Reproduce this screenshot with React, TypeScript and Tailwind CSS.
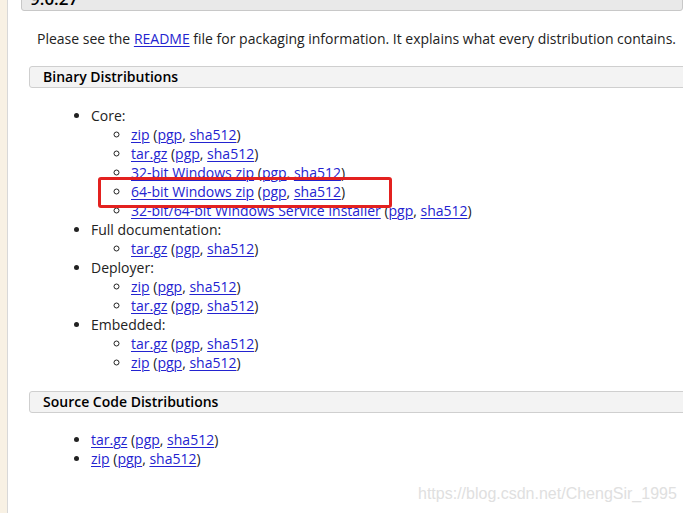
import React from "react";

const A = ({ children }: { children: React.ReactNode }) => (
  <a href="#" className="text-[#2323d0] underline decoration-1 underline-offset-[2px]">
    {children}
  </a>
);

const Links = ({ main }: { main: string }) => (
  <>
    <A>{main}</A> (<A>pgp</A>, <A>sha512</A>)
  </>
);

const Sub = ({ items }: { items: string[] }) => (
  <ul className="list-[circle] pl-[40px]">
    {items.map((m, i) => (
      <li key={i}>
        <Links main={m} />
      </li>
    ))}
  </ul>
);

export default function App() {
  return (
    <div
      className="flex min-h-[513px] w-[683px] overflow-hidden bg-white text-[14px] leading-[19px] text-[#222]"
      style={{ fontFamily: '"Open Sans", sans-serif' }}
    >
      <div className="w-[8px] shrink-0 bg-[#f8f1e4] border-r border-[#d8d8d8]" />
      <div className="relative flex-1 pl-[13px]">
        <div className="-mt-[12px] h-[23px] rounded-[3px] border border-[#c8c8c8] bg-[#e9e9e9] pl-[8px] text-[17px] font-semibold leading-[20px] text-black">
          9.0.27
        </div>
        <div className="pl-[8px]">
          <p className="mt-[18px] pl-[8px] whitespace-nowrap">
            Please see the <A>README</A> file for packaging information. It explains what every distribution contains.
          </p>
          <div className="mt-[18px] mr-[-10px] h-[22px] rounded-[3px] border border-[#cfcfcf] bg-[#f3f3f3] pl-[13px] font-semibold leading-[20px] text-black">
            Binary Distributions
          </div>
          <ul className="mt-[18px] list-disc pl-[62px]">
            <li>
              Core:
              <Sub
                items={[
                  "zip",
                  "tar.gz",
                  "32-bit Windows zip",
                  "64-bit Windows zip",
                  "32-bit/64-bit Windows Service Installer",
                ]}
              />
            </li>
            <li>
              Full documentation:
              <Sub items={["tar.gz"]} />
            </li>
            <li>
              Deployer:
              <Sub items={["zip", "tar.gz"]} />
            </li>
            <li>
              Embedded:
              <Sub items={["tar.gz", "zip"]} />
            </li>
          </ul>
          <div className="mt-[19px] mr-[-10px] h-[22px] rounded-[3px] border border-[#cfcfcf] bg-[#f3f3f3] pl-[13px] font-semibold leading-[20px] text-black">
            Source Code Distributions
          </div>
          <ul className="mt-[17px] list-disc pl-[62px]">
            <li>
              <Links main="tar.gz" />
            </li>
            <li>
              <Links main="zip" />
            </li>
          </ul>
        </div>
        <div
          className="absolute top-[484px] text-[16px] leading-[20px] text-[#e0e0e0]"
          style={{ fontFamily: '"Liberation Sans", Arial, sans-serif', left: 410 }}
        >
          https://blog.csdn.net/ChengSir_1995
        </div>
        <div className="absolute left-[90px] top-[177px] h-[31px] w-[294px] rounded-[3px] border-[3px] border-[#e3211f]" />
      </div>
    </div>
  );
}
